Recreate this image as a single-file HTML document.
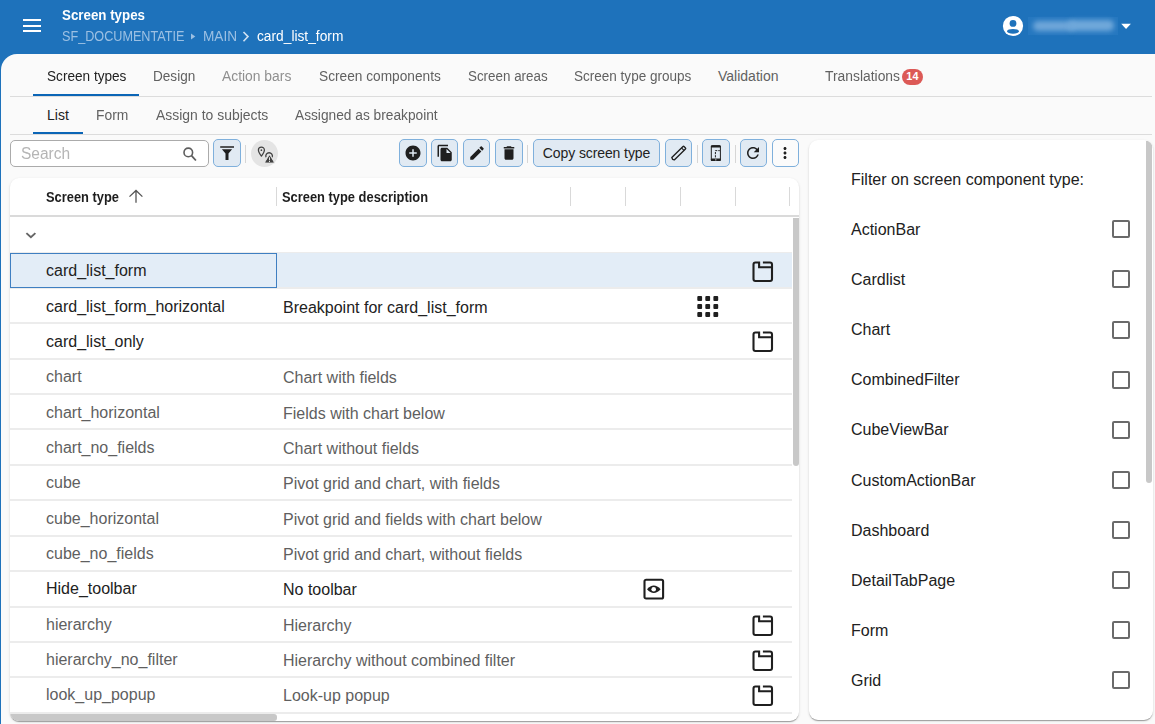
<!DOCTYPE html><html><head><meta charset="utf-8"><style>
*{box-sizing:border-box;margin:0;padding:0}
html,body{width:1155px;height:724px;overflow:hidden;background:#fafafa;font-family:"Liberation Sans",sans-serif}
.abs{position:absolute}
#hdr{position:absolute;left:0;top:0;width:1155px;height:54px;background:#1e72bb}
#leftline{position:absolute;left:0;top:46px;width:24px;height:678px;background:#1e72bb}
#panel{position:absolute;left:1px;top:54px;width:1154px;height:670px;background:#fafafa;border-top-left-radius:16px}
.ham{position:absolute;left:23px;width:18px;height:2px;background:#fff}
.tab{position:absolute;font-size:14px;color:#616161;white-space:nowrap;line-height:16px;transform-origin:0 0}
.tabul{position:absolute;height:2px;background:#0b65b6}
.divider{position:absolute;left:10px;width:1142px;height:1px;background:#dcdcdc}
.btn{position:absolute;top:139px;height:27.5px;width:28px;border:1px solid #7fb0dc;background:#e1eaf3;border-radius:5px}
.btn svg{position:absolute;left:50%;top:50%;transform:translate(-50%,-50%)}
.sep{position:absolute;top:144.5px;width:1px;height:18px;background:#d6d6d6}
#card{position:absolute;left:10px;top:178px;width:789px;height:542.5px;background:#fff;border-radius:9px;box-shadow:0 2px 1px -1px rgba(0,0,0,.2),0 1px 1px 0 rgba(0,0,0,.14),0 1px 3px 0 rgba(0,0,0,.12);overflow:hidden}
#rpanel{position:absolute;left:809px;top:140px;width:343.5px;height:580px;background:#fff;border-radius:9px;box-shadow:0 2px 1px -1px rgba(0,0,0,.2),0 1px 1px 0 rgba(0,0,0,.14),0 1px 3px 0 rgba(0,0,0,.12);overflow:hidden}
.row{position:absolute;left:0;width:782px;height:35.42px;border-top:1px solid #e3e3e3}
.row.sel{background:#e3edf7}
.selcell{position:absolute;left:0;top:0;width:267px;height:34.5px;border:1px solid #3f7fc1}
.c1{position:absolute;left:36px;line-height:18px;font-size:16px;white-space:nowrap}
.c2{position:absolute;left:273px;line-height:18px;font-size:16px;white-space:nowrap}
.hcol{position:absolute;top:9px;width:1px;height:19px;background:#d9d9d9}
.flabel{position:absolute;left:42px;font-size:16px;color:#212121;white-space:nowrap;line-height:18px}
.chk{position:absolute;left:303px;width:18px;height:18px;border:2px solid #6a6a6a;border-radius:2px}
</style></head><body><div id="hdr">
<div class="ham" style="top:19px"></div>
<div class="ham" style="top:25px"></div>
<div class="ham" style="top:30px"></div>
<div class="abs" style="left:62px;top:6.6px;font-size:13.8px;font-weight:700;color:#fff;white-space:nowrap;line-height:18px;transform:scaleX(.966);transform-origin:0 0">Screen types</div>
<div class="abs" style="left:62px;top:27.4px;font-size:14px;color:#9cc0e3;white-space:nowrap;line-height:18px;transform:scaleX(.903);transform-origin:0 0">SF_DOCUMENTATIE</div>
<svg class="abs" style="left:189px;top:32px" width="8" height="9" viewBox="0 0 8 9"><path d="M2 1.5L6.3 4.5L2 7.5Z" fill="#9cc0e3"/></svg>
<div class="abs" style="left:202.5px;top:27.4px;font-size:14px;color:#9cc0e3;white-space:nowrap;line-height:18px;transform:scaleX(.975);transform-origin:0 0">MAIN</div>
<svg class="abs" style="left:240px;top:30px" width="12" height="13" viewBox="0 0 12 13"><path d="M3.5 2L8 6.6L3.5 11.2" fill="none" stroke="#cfe0f1" stroke-width="1.6"/></svg>
<div class="abs" style="left:256.5px;top:27.4px;font-size:14px;color:#fff;white-space:nowrap;line-height:18px;transform:scaleX(.982);transform-origin:0 0">card_list_form</div>
<svg class="abs" style="left:1001px;top:14px" width="24" height="24" viewBox="0 0 24 24"><circle cx="12" cy="12" r="10.1" fill="#fff"/><circle cx="12" cy="9.4" r="3.4" fill="#1e72bb"/><ellipse cx="12" cy="17.3" rx="5.9" ry="2.4" fill="#1e72bb"/></svg>
<div class="abs" style="left:1028px;top:17px;width:90px;height:18px;background:#2678c0"></div>
<div class="abs" style="left:1033px;top:21px;width:42px;height:10px;background:#6ea6d9;filter:blur(2.5px);border-radius:5px"></div>
<div class="abs" style="left:1068px;top:20px;width:46px;height:11px;background:#70a8da;filter:blur(2.5px);border-radius:5px"></div>
<svg class="abs" style="left:1120px;top:22px" width="12" height="8" viewBox="0 0 12 8"><path d="M1.2 1.7H10.9L6.05 7Z" fill="#fff"/></svg>
</div>
<div id="leftline"></div>
<div id="panel"></div>
<div class="tab" style="left:47px;top:67.5px;color:#222;transform:scaleX(0.972)">Screen types</div>
<div class="tab" style="left:153px;top:67.5px;color:#616161;transform:scaleX(0.97)">Design</div>
<div class="tab" style="left:222.3px;top:67.5px;color:#8f8f8f;transform:scaleX(0.99)">Action bars</div>
<div class="tab" style="left:319px;top:67.5px;color:#616161;transform:scaleX(0.978)">Screen components</div>
<div class="tab" style="left:467.5px;top:67.5px;color:#616161;transform:scaleX(0.956)">Screen areas</div>
<div class="tab" style="left:574px;top:67.5px;color:#616161;transform:scaleX(0.966)">Screen type groups</div>
<div class="tab" style="left:718px;top:67.5px;color:#616161;transform:scaleX(1.0)">Validation</div>
<div class="tab" style="left:824.6px;top:67.5px;color:#616161;transform:scaleX(0.99)">Translations</div>
<div class="abs" style="left:902px;top:68.5px;width:21px;height:16px;border-radius:8px;background:#dc5956;color:#fff;font-size:10.8px;font-weight:700;text-align:center;line-height:14.5px;letter-spacing:0.3px">14</div>
<div class="tabul" style="left:33px;top:94px;width:106px"></div>
<div class="divider" style="top:96px"></div>
<div class="tab" style="left:47px;top:106.5px;color:#222;transform:scaleX(1.0)">List</div>
<div class="tab" style="left:96px;top:106.5px;color:#616161;transform:scaleX(0.99)">Form</div>
<div class="tab" style="left:156px;top:106.5px;color:#616161;transform:scaleX(0.995)">Assign to subjects</div>
<div class="tab" style="left:295px;top:106.5px;color:#616161;transform:scaleX(0.98)">Assigned as breakpoint</div>
<div class="tabul" style="left:33px;top:132px;width:50px"></div>
<div class="divider" style="top:134px"></div>
<div class="abs" style="left:10px;top:140px;width:199px;height:26.5px;border:1px solid #ababab;border-radius:5px;background:#fff"></div>
<div class="abs" style="left:20.5px;top:145px;font-size:16px;color:#b5b5b5;line-height:18px;transform:scaleX(.97);transform-origin:0 0">Search</div>
<svg class="abs" style="left:180px;top:145px" width="20" height="20" viewBox="0 0 20 20"><circle cx="8.3" cy="7.4" r="4.3" fill="none" stroke="#5e5e5e" stroke-width="1.6"/><path d="M11.3 10.4L15.9 15.5" stroke="#5e5e5e" stroke-width="1.8"/></svg>
<div class="btn" style="left:213px;width:28px;"><svg width="18" height="18" viewBox="0 0 18 18"><rect x="2.2" y="2.2" width="13.8" height="1.6" fill="#2f2f2f"/><path d="M3.9 5.2H14.1L10.5 9.4V16H7.5V9.4Z" fill="#1f1f1f"/></svg></div>
<div class="sep" style="left:245px"></div>
<div class="abs" style="left:251px;top:140px;width:27px;height:27px;border-radius:50%;background:#e4e4e4"></div>
<svg class="abs" style="left:250px;top:139px" width="30" height="29" viewBox="0 0 30 29"><path d="M11.4 17.2C9.7 14.9 8.4 12.9 8.4 11A3 3 0 0 1 14.4 11C14.4 12.9 13.1 14.9 11.4 17.2Z" fill="none" stroke="#404040" stroke-width="1.25" stroke-linejoin="round"/><circle cx="11.4" cy="11.2" r="0.85" fill="#404040"/><path d="M16 18.2A3.3 3.3 0 1 1 22.2 18.2" fill="none" stroke="#404040" stroke-width="1.3"/><path d="M19.5 15.6L24.4 23.8H14.6Z" fill="#404040" stroke="#e4e4e4" stroke-width="1.2" stroke-linejoin="round"/><path d="M19.5 16.3L23.9 23.6H15.1Z" fill="#404040"/><rect x="19" y="18.3" width="1" height="3" fill="#e4e4e4"/><rect x="19" y="22" width="1" height="1" fill="#e4e4e4"/></svg>
<div class="btn" style="left:399px;width:28px;"><svg width="18" height="18" viewBox="0 0 24 24"><path fill="#1f1f1f" d="M12 2C6.48 2 2 6.48 2 12s4.48 10 10 10 10-4.48 10-10S17.52 2 12 2zm5 11h-4v4h-2v-4H7v-2h4V7h2v4h4v2z"/></svg></div>
<div class="btn" style="left:431px;width:27px;"><svg width="18" height="18" viewBox="0 0 24 24"><path fill="#1f1f1f" d="M16 1H4c-1.1 0-2 .9-2 2v14h2V3h12V1zm-1 4l6 6v10c0 1.1-.9 2-2 2H7.99C6.89 23 6 22.1 6 21l.01-14c0-1.1.89-2 1.99-2h7zm-1 7h5.5L14 6.5V12z"/></svg></div>
<div class="btn" style="left:463px;width:27px;"><svg width="18" height="18" viewBox="0 0 24 24"><path fill="#1f1f1f" d="M3 17.25V21h3.75L17.81 9.94l-3.75-3.75L3 17.25zM20.71 7.04c.39-.39.39-1.02 0-1.41l-2.34-2.34c-.39-.39-1.02-.39-1.41 0l-1.83 1.83 3.75 3.75 1.83-1.83z"/></svg></div>
<div class="btn" style="left:495px;width:27.5px;"><svg width="18" height="18" viewBox="0 0 24 24"><path fill="#1f1f1f" d="M6 19c0 1.1.9 2 2 2h8c1.1 0 2-.9 2-2V7H6v12zM19 4h-3.5l-1-1h-5l-1 1H5v2h14V4z"/></svg></div>
<div class="sep" style="left:527px"></div>
<div class="btn" style="left:533px;width:127px;font-size:14px;color:#222;text-align:center;line-height:27.5px;letter-spacing:-0.1px">Copy screen type</div>
<div class="btn" style="left:665px;width:27px;"><svg width="18" height="18" viewBox="0 0 18 18"><g transform="translate(8.6 9.2) rotate(-44.4)"><path d="M-8.6 0.2L-7.8 -1.75H7.9Q8.6 -1.75 8.6 -1.05V1.05Q8.6 1.75 7.9 1.75H-7.8Z" fill="none" stroke="#1f1f1f" stroke-width="1.35" stroke-linejoin="round"/><path d="M5.8 -1.75V1.75" stroke="#1f1f1f" stroke-width="1.1"/></g></svg></div>
<div class="sep" style="left:697px"></div>
<div class="btn" style="left:702px;width:28px;"><svg style="margin-top:-1px" width="18" height="18" viewBox="0 0 18 18"><rect x="4.3" y="2.75" width="9.1" height="14.8" rx="1.2" fill="none" stroke="#1f1f1f" stroke-width="1"/><rect x="3.8" y="2.25" width="10.1" height="2.2" rx="1" fill="#1f1f1f"/><rect x="3.8" y="15.55" width="10.1" height="2.5" rx="1" fill="#1f1f1f"/><circle cx="8.85" cy="16.8" r="0.6" fill="#fff"/><path d="M8.4 14.4V7.65H12.8" fill="none" stroke="#1f1f1f" stroke-width="1" stroke-dasharray="2.2 1"/></svg></div>
<div class="sep" style="left:734.5px"></div>
<div class="btn" style="left:740px;width:27px;"><svg style="margin-left:-1px" width="18" height="18" viewBox="0 0 24 24"><path fill="#1f1f1f" d="M17.65 6.35C16.2 4.9 14.21 4 12 4c-4.42 0-7.99 3.58-7.99 8s3.57 8 7.99 8c3.73 0 6.84-2.55 7.73-6h-2.08c-.82 2.33-3.04 4-5.65 4-3.31 0-6-2.69-6-6s2.69-6 6-6c1.66 0 3.14.69 4.22 1.78L13 11h7V4l-2.35 2.35z"/></svg></div>
<div class="btn" style="left:772px;width:27px;background:#fbfbfb"><svg style="margin-left:-1px" width="18" height="18" viewBox="0 0 24 24"><path fill="#1f1f1f" d="M12 8c1.1 0 2-.9 2-2s-.9-2-2-2-2 .9-2 2 .9 2 2 2zm0 2c-1.1 0-2 .9-2 2s.9 2 2 2 2-.9 2-2-.9-2-2-2zm0 6c-1.1 0-2 .9-2 2s.9 2 2 2 2-.9 2-2-.9-2-2-2z"/></svg></div>
<div id="card">
<div class="abs" style="left:36px;top:11px;font-size:14px;font-weight:700;color:#1e1e1e;white-space:nowrap;line-height:16px;transform:scaleX(.919);transform-origin:0 0">Screen type</div>
<svg class="abs" style="left:116px;top:10px" width="20" height="16" viewBox="0 0 20 16"><path d="M3.5 8.6L10 2.5L16.4 8.6M10 2.7V14.7" fill="none" stroke="#555" stroke-width="1.3"/></svg>
<div class="abs" style="left:272px;top:11px;font-size:14px;font-weight:700;color:#1e1e1e;white-space:nowrap;line-height:16px;transform:scaleX(.92);transform-origin:0 0">Screen type description</div>
<div class="hcol" style="left:266px"></div>
<div class="hcol" style="left:560px"></div>
<div class="hcol" style="left:615px"></div>
<div class="hcol" style="left:670px"></div>
<div class="hcol" style="left:725px"></div>
<div class="hcol" style="left:779px"></div>
<div class="abs" style="left:0;top:37px;width:789px;height:2px;background:#dadada"></div>
<svg class="abs" style="left:14px;top:50px" width="16" height="16" viewBox="0 0 16 16"><path d="M2.4 5.1L6.9 9.3L11.4 5.1" fill="none" stroke="#666" stroke-width="1.9"/></svg>
<div class="abs" style="left:0;top:74px;width:782px;height:2px;background:#ececec"></div>
<div class="abs" style="left:0;top:109px;width:782px;height:2px;background:#ececec"></div>
<div class="abs" style="left:0;top:144px;width:782px;height:2px;background:#ececec"></div>
<div class="abs" style="left:0;top:180px;width:782px;height:2px;background:#ececec"></div>
<div class="abs" style="left:0;top:215px;width:782px;height:2px;background:#ececec"></div>
<div class="abs" style="left:0;top:250px;width:782px;height:2px;background:#ececec"></div>
<div class="abs" style="left:0;top:286px;width:782px;height:2px;background:#ececec"></div>
<div class="abs" style="left:0;top:321px;width:782px;height:2px;background:#ececec"></div>
<div class="abs" style="left:0;top:357px;width:782px;height:2px;background:#ececec"></div>
<div class="abs" style="left:0;top:392px;width:782px;height:2px;background:#ececec"></div>
<div class="abs" style="left:0;top:428px;width:782px;height:2px;background:#ececec"></div>
<div class="abs" style="left:0;top:463px;width:782px;height:2px;background:#ececec"></div>
<div class="abs" style="left:0;top:498px;width:782px;height:2px;background:#ececec"></div>
<div class="abs" style="left:0;top:534px;width:782px;height:2px;background:#ececec"></div>
<div class="abs" style="left:0;top:75.00px;width:782px;height:34.40px;background:#e3edf7"></div><div class="abs" style="left:0;top:75px;width:267px;height:35px;border:1px solid #3f7fc1"></div><div class="c1" style="top:84px;color:#222">card_list_form</div><svg width="22" height="22" viewBox="0 0 22 22" style="position:absolute;left:742px;top:82.60px"><path d="M10.9 1.5H18.1Q20 1.5 20 3.4V18.1Q20 20 18.1 20H3.4Q1.5 20 1.5 18.1V3.4Q1.5 1.5 3.4 1.5H7.1V6.3H20" fill="none" stroke="#1f1f1f" stroke-width="2.1"/></svg>
<div class="c1" style="top:120px;color:#222">card_list_form_horizontal</div><div class="c2" style="top:121px;color:#222">Breakpoint for card_list_form</div><svg width="22" height="22" viewBox="0 0 22 22" style="position:absolute;left:687px;top:117.40px"><rect x="0.30" y="1.10" width="4.8" height="4.8" rx="1" fill="#1f1f1f"/><rect x="8.30" y="1.10" width="4.8" height="4.8" rx="1" fill="#1f1f1f"/><rect x="16.40" y="1.10" width="4.8" height="4.8" rx="1" fill="#1f1f1f"/><rect x="0.30" y="9.10" width="4.8" height="4.8" rx="1" fill="#1f1f1f"/><rect x="8.30" y="9.10" width="4.8" height="4.8" rx="1" fill="#1f1f1f"/><rect x="16.40" y="9.10" width="4.8" height="4.8" rx="1" fill="#1f1f1f"/><rect x="0.30" y="17.10" width="4.8" height="4.8" rx="1" fill="#1f1f1f"/><rect x="8.30" y="17.10" width="4.8" height="4.8" rx="1" fill="#1f1f1f"/><rect x="16.40" y="17.10" width="4.8" height="4.8" rx="1" fill="#1f1f1f"/></svg>
<div class="c1" style="top:155px;color:#222">card_list_only</div><svg width="22" height="22" viewBox="0 0 22 22" style="position:absolute;left:742px;top:153.40px"><path d="M10.9 1.5H18.1Q20 1.5 20 3.4V18.1Q20 20 18.1 20H3.4Q1.5 20 1.5 18.1V3.4Q1.5 1.5 3.4 1.5H7.1V6.3H20" fill="none" stroke="#1f1f1f" stroke-width="2.1"/></svg>
<div class="c1" style="top:190px;color:#5f5f5f">chart</div><div class="c2" style="top:191px;color:#5f5f5f">Chart with fields</div>
<div class="c1" style="top:226px;color:#5f5f5f">chart_horizontal</div><div class="c2" style="top:227px;color:#5f5f5f">Fields with chart below</div>
<div class="c1" style="top:261px;color:#5f5f5f">chart_no_fields</div><div class="c2" style="top:262px;color:#5f5f5f">Chart without fields</div>
<div class="c1" style="top:296px;color:#5f5f5f">cube</div><div class="c2" style="top:297px;color:#5f5f5f">Pivot grid and chart, with fields</div>
<div class="c1" style="top:332px;color:#5f5f5f">cube_horizontal</div><div class="c2" style="top:333px;color:#5f5f5f">Pivot grid and fields with chart below</div>
<div class="c1" style="top:367px;color:#5f5f5f">cube_no_fields</div><div class="c2" style="top:368px;color:#5f5f5f">Pivot grid and chart, without fields</div>
<div class="c1" style="top:402px;color:#222">Hide_toolbar</div><div class="c2" style="top:403px;color:#222">No toolbar</div><svg width="22" height="22" viewBox="0 0 22 22" style="position:absolute;left:633px;top:400.10px"><rect x="1.5" y="1.8" width="18.6" height="18.7" rx="1.6" fill="none" stroke="#1f1f1f" stroke-width="2.1"/><path d="M4 11.3Q10.8 3.8 17.6 11.3Q10.8 18.8 4 11.3Z" fill="#1f1f1f"/><circle cx="10.7" cy="11.3" r="2.3" fill="#fff"/></svg>
<div class="c1" style="top:438px;color:#5f5f5f">hierarchy</div><div class="c2" style="top:439px;color:#5f5f5f">Hierarchy</div><svg width="22" height="22" viewBox="0 0 22 22" style="position:absolute;left:742px;top:436.60px"><path d="M10.9 1.5H18.1Q20 1.5 20 3.4V18.1Q20 20 18.1 20H3.4Q1.5 20 1.5 18.1V3.4Q1.5 1.5 3.4 1.5H7.1V6.3H20" fill="none" stroke="#1f1f1f" stroke-width="2.1"/></svg>
<div class="c1" style="top:473px;color:#5f5f5f">hierarchy_no_filter</div><div class="c2" style="top:474px;color:#5f5f5f">Hierarchy without combined filter</div><svg width="22" height="22" viewBox="0 0 22 22" style="position:absolute;left:742px;top:472.00px"><path d="M10.9 1.5H18.1Q20 1.5 20 3.4V18.1Q20 20 18.1 20H3.4Q1.5 20 1.5 18.1V3.4Q1.5 1.5 3.4 1.5H7.1V6.3H20" fill="none" stroke="#1f1f1f" stroke-width="2.1"/></svg>
<div class="c1" style="top:508px;color:#5f5f5f">look_up_popup</div><div class="c2" style="top:509px;color:#5f5f5f">Look-up popup</div><svg width="22" height="22" viewBox="0 0 22 22" style="position:absolute;left:742px;top:507.40px"><path d="M10.9 1.5H18.1Q20 1.5 20 3.4V18.1Q20 20 18.1 20H3.4Q1.5 20 1.5 18.1V3.4Q1.5 1.5 3.4 1.5H7.1V6.3H20" fill="none" stroke="#1f1f1f" stroke-width="2.1"/></svg>
<div class="abs" style="left:783px;top:39.8px;width:6px;height:248px;background:#c8c8c8;border-radius:0 0 3px 3px"></div>
<div class="abs" style="left:0;top:536px;width:267px;height:7px;background:#c8c8c8;border-radius:0 3px 3px 0"></div>
</div>
<div id="rpanel">
<div class="flabel" style="top:31px">Filter on screen component type:</div>
<div class="flabel" style="top:81.0px">ActionBar</div>
<div class="chk" style="top:80.3px"></div>
<div class="flabel" style="top:131.1px">Cardlist</div>
<div class="chk" style="top:130.4px"></div>
<div class="flabel" style="top:181.2px">Chart</div>
<div class="chk" style="top:180.5px"></div>
<div class="flabel" style="top:231.3px">CombinedFilter</div>
<div class="chk" style="top:230.6px"></div>
<div class="flabel" style="top:281.4px">CubeViewBar</div>
<div class="chk" style="top:280.7px"></div>
<div class="flabel" style="top:331.5px">CustomActionBar</div>
<div class="chk" style="top:330.8px"></div>
<div class="flabel" style="top:381.6px">Dashboard</div>
<div class="chk" style="top:380.9px"></div>
<div class="flabel" style="top:431.7px">DetailTabPage</div>
<div class="chk" style="top:431.0px"></div>
<div class="flabel" style="top:481.8px">Form</div>
<div class="chk" style="top:481.1px"></div>
<div class="flabel" style="top:531.9px">Grid</div>
<div class="chk" style="top:531.2px"></div>
<div class="abs" style="left:337.2px;top:1px;width:6px;height:341.5px;background:#c8c8c8;border-radius:0 0 3px 3px"></div>
</div></body></html>
